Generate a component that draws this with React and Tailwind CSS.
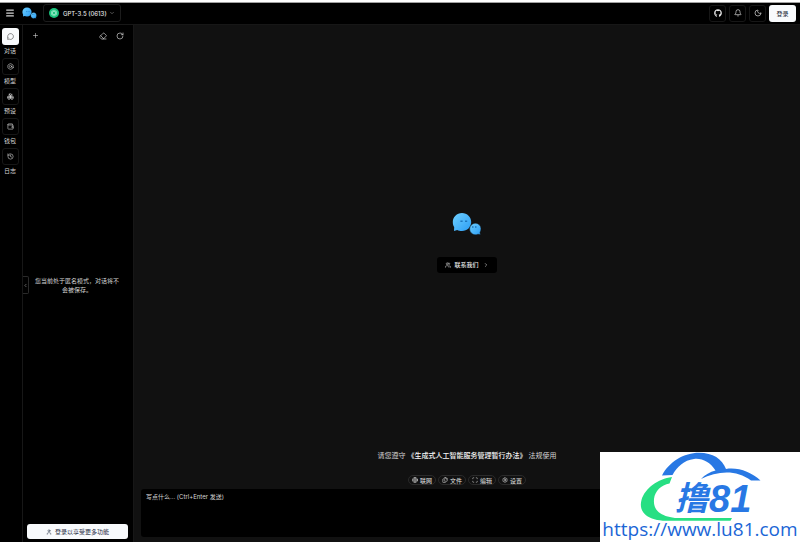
import React, { useState } from 'react';
import {
  Bell,
  Bolt,
  Boxes,
  ChevronDown,
  ChevronLeft,
  ChevronRight,
  Eraser,
  Files,
  Globe,
  History,
  Menu,
  MessageCircle,
  Moon,
  Plus,
  RotateCw,
  Scan,
  Settings,
  User,
  Users,
  Wallet
} from 'lucide-react';
import { FaGithub } from 'react-icons/fa';

const navItems = [
  { id: 'chat', label: '对话', icon: MessageCircle },
  { id: 'model', label: '模型', icon: Bolt },
  { id: 'preset', label: '预设', icon: Boxes },
  { id: 'wallet', label: '钱包', icon: Wallet },
  { id: 'log', label: '日志', icon: History }
];

const tools = [
  { id: 'web', label: '联网', icon: Globe },
  { id: 'file', label: '文件', icon: Files },
  { id: 'edit', label: '编辑', icon: Scan },
  { id: 'settings', label: '设置', icon: Settings }
];

const ChatLogo = ({ className }) => (
  <svg viewBox="0 0 30 24" className={className} aria-hidden="true">
    <defs>
      <linearGradient id="bubble" x1="0" y1="0" x2="1" y2="1">
        <stop offset="0" stopColor="#6fd0ff" />
        <stop offset="1" stopColor="#2b9df4" />
      </linearGradient>
    </defs>
    <path
      d="M10 1C15.200 1 19.200 5 19.200 10S15.200 19 10 19C8 19 6.600 18.600 5.200 18L2 19L2.200 15C1.200 13.600 0.800 12 0.800 10C0.800 5 4.800 1 10 1Z"
      fill="url(#bubble)"
    />
    <path
      d="M23.400 11.200C26.600 11.200 29 13.600 29 16.800C29 18.200 28.600 19.400 28 20.400L28.400 22.800L26 22.200C25.200 22.600 24.400 22.800 23.400 22.800C20.200 22.800 17.600 20.200 17.600 17S20.200 11.200 23.400 11.200Z"
      fill="url(#bubble)"
      stroke="#111111"
      strokeWidth="0.500"
    />
    <path d="M8.400 9.200h2.200M13 9.200h2.200M20 15h1.500M23 15h1.500" stroke="#1d76bd" strokeWidth="1.500" />
  </svg>
);

const SiteBadge = () => (
  <a
    href="https://www.lu81.com"
    className="fixed right-0 bottom-0 flex h-[90px] w-[200px] flex-col items-center bg-white text-[#1b66d6]"
  >
    <svg viewBox="0 0 200 72" className="h-[72px] w-full shrink-0" role="img" aria-label="撸81">
      <path
        d="M62 23.500C69 10 84 0.800 99 0.800C113 0.800 122 7 126 17C138 15 151 20 160.500 28.500H151C136 17 117 19 101 27C105 22.500 110 20 115.500 18.500C110 10 102 6 94 7C84 8 77 15 72.500 23Z"
        fill="#2878e4"
      />
      <path
        d="M72 25C58 27 45 36 41.500 48C38 61 49 68.500 66 68.800H130.500L132 66H75C61 64 53 59 54 47C55 39 61 33 69.500 31.500Z"
        fill="#27df83"
      />
      <text
        x="75"
        y="58"
        fill="#2878e4"
        className="font-['Noto_Sans_CJK_SC',sans-serif] text-[33px] font-bold italic"
      >
        撸
      </text>
      <text
        x="109"
        y="60"
        fill="#2878e4"
        className="font-['Liberation_Sans',sans-serif] text-[38px] font-bold italic"
      >
        81
      </text>
    </svg>
    <span className="-mt-2 font-['Open_Sans',sans-serif] text-[19px] leading-[26px]">https://www.lu81.com</span>
  </a>
);

const IconButton = ({ label, icon: Icon }) => (
  <button
    type="button"
    aria-label={label}
    className="flex size-[17px] items-center justify-center rounded-[3px] border border-[#171717]"
  >
    <Icon className="size-2" />
  </button>
);

const Header = () => (
  <header className="flex h-[23px] shrink-0 items-center border-t border-b border-t-neutral-400 border-b-[#171717] px-1 pb-px">
    <button type="button" aria-label="菜单" className="ml-px">
      <Menu className="size-[10px] text-neutral-300" strokeWidth={3} />
    </button>
    <ChatLogo className="ml-[7px] h-3 w-[15px]" />
    <button
      type="button"
      className="ml-[6px] flex h-[18px] items-center rounded-[3px] border border-[#1c1c1c] px-[5px] text-[6px] font-medium"
    >
      <svg viewBox="0 0 20 20" className="mr-1 size-[10px]" aria-hidden="true">
        <circle cx="10" cy="10" r="10" fill="#19c37d" />
        <g fill="none" stroke="#b7f5d9" strokeWidth="1">
          <ellipse cx="10" cy="10" rx="3" ry="6" />
          <ellipse cx="10" cy="10" rx="3" ry="6" transform="rotate(60 10 10)" />
          <ellipse cx="10" cy="10" rx="3" ry="6" transform="rotate(120 10 10)" />
        </g>
      </svg>
      GPT-3.5 (0613)
      <ChevronDown className="ml-[2px] size-[6px] text-neutral-400" />
    </button>
    <div className="ml-auto flex items-center gap-[3px]">
      <IconButton label="GitHub" icon={FaGithub} />
      <IconButton label="通知" icon={Bell} />
      <IconButton label="主题" icon={Moon} />
      <button type="button" className="h-[17px] w-[27px] rounded-[3px] bg-slate-50 text-[6px] text-slate-900">
        登录
      </button>
    </div>
  </header>
);

const NavRail = ({ active, onSelect }) => (
  <nav className="flex w-[23px] shrink-0 flex-col items-center border-r border-[#171717] pt-[3px]">
    {navItems.map(({ id, label, icon: Icon }) => (
      <button
        key={id}
        type="button"
        onClick={() => onSelect(id)}
        className="mr-[2px] flex h-[30px] flex-col items-center text-[6px] leading-[10px] text-neutral-300"
      >
        <span
          className={
            id === active
              ? 'mb-px flex size-[17px] items-center justify-center rounded-[3px] bg-slate-50 text-neutral-700'
              : 'mb-px flex size-[17px] items-center justify-center rounded-[3px] border border-[#171717]'
          }
        >
          <Icon className="size-[7px]" />
        </span>
        {label}
      </button>
    ))}
  </nav>
);

const Sidebar = () => (
  <aside className="flex w-[111px] shrink-0 flex-col border-r border-[#171717]">
    <div className="flex h-[21px] items-center px-[9px] text-neutral-300">
      <button type="button" aria-label="新对话">
        <Plus className="size-[7px]" />
      </button>
      <button type="button" aria-label="清空" className="ml-auto">
        <Eraser className="size-2" />
      </button>
      <button type="button" aria-label="刷新" className="ml-[9px]">
        <RotateCw className="size-2" />
      </button>
    </div>
    <div className="flex flex-1 items-center">
      <button
        type="button"
        aria-label="收起"
        className="flex h-[18px] w-[6px] shrink-0 items-center justify-center rounded-r-[2px] border border-l-0 border-[#2a2a2a]"
      >
        <ChevronLeft className="size-[5px]" />
      </button>
      <p className="flex-1 pr-3 pl-1 text-center text-[6px] leading-[9px] text-neutral-300">
        您当前处于匿名模式，对话将不
        <br />
        会被保存。
      </p>
    </div>
    <button
      type="button"
      className="mr-[5px] mb-[3px] ml-1 flex h-[15px] items-center justify-center gap-[3px] rounded-[3px] bg-slate-50 text-[6px] text-slate-800"
    >
      <User className="size-[6px]" />
      登录以享受更多功能
    </button>
  </aside>
);

const ChatPanel = () => {
  const [message, setMessage] = useState('');

  return (
    <main className="flex min-w-0 flex-1 flex-col bg-[#111111] px-[7px] pb-[5px]">
      <div className="flex flex-1 flex-col items-center justify-center gap-[21px] pt-2">
        <ChatLogo className="h-6 w-[30px]" />
        <button
          type="button"
          className="flex h-4 items-center rounded-[3px] bg-black px-2 text-[6px] font-medium"
        >
          <Users className="mr-[3px] size-[6px]" />
          联系我们
          <ChevronRight className="ml-1 size-[6px]" />
        </button>
      </div>
      <p className="text-center text-[7px] leading-[10px] text-neutral-300">
        请您遵守 <a href="#rules" className="font-medium text-neutral-100">《生成式人工智能服务管理暂行办法》</a> 法规使用
      </p>
      <div className="mt-[14px] mb-1 flex justify-center gap-[2px]">
        {tools.map(({ id, label, icon: Icon }) => (
          <button
            key={id}
            type="button"
            className="flex h-[10px] items-center gap-[2px] rounded-full border border-[#2a2a2a] px-[3px] text-[6px] text-neutral-200"
          >
            <Icon className="size-[6px]" />
            {label}
          </button>
        ))}
      </div>
      <textarea
        aria-label="消息"
        value={message}
        onChange={(e) => setMessage(e.target.value)}
        placeholder="写点什么... (Ctrl+Enter 发送)"
        className="block h-12 w-full resize-none rounded-[3px] bg-black px-[5px] py-[3px] text-[6px] leading-[9px] outline-none placeholder:text-neutral-300"
      />
    </main>
  );
};

const App = () => {
  const [active, setActive] = useState('chat');

  return (
    <div className="flex h-screen flex-col border-t-2 border-white bg-black font-['Inter','Noto_Sans_CJK_SC',sans-serif] text-neutral-200">
      <Header />
      <div className="flex min-h-0 flex-1">
        <NavRail active={active} onSelect={setActive} />
        <Sidebar />
        <ChatPanel />
      </div>
      <SiteBadge />
    </div>
  );
};

export default App;
